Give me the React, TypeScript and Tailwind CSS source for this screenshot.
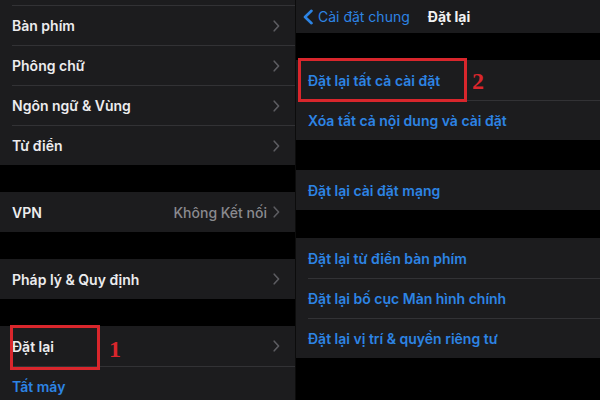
import React from "react";

const font = { fontFamily: "Inter, 'Noto Sans', sans-serif" };

const Chevron = () => (
  <svg width="7" height="12" viewBox="0 0 7 12" className="shrink-0">
    <path d="M1.2 1.2 L5.6 6 L1.2 10.8" fill="none" stroke="#5c5c61" strokeWidth="1.6" strokeLinecap="round" strokeLinejoin="round" />
  </svg>
);

type RowProps = {
  label: string;
  first?: boolean;
  value?: string;
  blue?: boolean;
  chevron?: boolean;
  children?: React.ReactNode;
};

const Row = ({ label, first, value, blue, chevron = true, children }: RowProps) => (
  <div className="relative shrink-0 bg-[#1c1c1e] pl-3">
    <div
      className={`flex h-10 items-center justify-between pr-[15px] ${
        first ? "" : "border-t border-[#323235]"
      }`}
    >
      <span className={`text-[14px] font-semibold ${blue ? "text-[#2d84e4]" : "text-[#ececee]"}`}>{label}</span>
      {chevron && (
        <div className="flex items-center gap-[6px]">
          {value && <span className="text-[14px] font-medium text-[#8a8a8f]">{value}</span>}
          <Chevron />
        </div>
      )}
    </div>
    {children}
  </div>
);

const Gap = ({ h }: { h: string }) => <div className={`shrink-0 ${h}`} />;

const Mark = ({ n, className }: { n: string; className: string }) => (
  <span
    className={`absolute z-10 text-[24px] font-bold leading-none text-[#d9262c] ${className}`}
    style={{ fontFamily: "'Liberation Serif', serif" }}
  >
    {n}
  </span>
);

export default function App() {
  return (
    <div className="flex h-[400px] w-[600px] overflow-hidden bg-black" style={font}>
      {/* left: Cài đặt chung */}
      <div className="flex w-[295px] shrink-0 flex-col">
        <div className="h-[5px] shrink-0 bg-[#1c1c1e]" />
        <Row label="Bàn phím" />
        <Row label="Phông chữ" />
        <Row label="Ngôn ngữ & Vùng" />
        <Row label="Từ điển" />
        <Gap h="h-[27px]" />
        <Row label="VPN" value="Không Kết nối" first />
        <Gap h="h-[27px]" />
        <Row label="Pháp lý & Quy định" first />
        <Gap h="h-[27px]" />
        <Row label="Đặt lại" first>
          <div className="absolute left-[10px] top-[-1px] z-10 h-[45px] w-[90px] border-[3px] border-[#d9262c]" />
          <Mark n="1" className="left-[109px] top-[11px]" />
        </Row>
        <Row label="Tất máy" blue chevron={false} />
      </div>

      <div className="w-px shrink-0 bg-[#0c0c0c]" />

      {/* right: Đặt lại */}
      <div className="flex flex-1 flex-col">
        <div className="flex h-[33px] shrink-0 items-center bg-[#1b1b1d] pl-[6px]">
          <svg width="12" height="16" viewBox="0 0 12 16" className="mr-[4px]">
            <path d="M9.5 1.8 L3 8 L9.5 14.2" fill="none" stroke="#2d84e4" strokeWidth="2.6" strokeLinecap="round" strokeLinejoin="round" />
          </svg>
          <span className="text-[14px] text-[#2d84e4]">Cài đặt chung</span>
          <span className="ml-[18px] text-[14px] font-bold text-[#f2f2f2]">Đặt lại</span>
        </div>
        <Gap h="h-[27px]" />
        <Row label="Đặt lại tất cả cài đặt" blue chevron={false} first>
          <div className="absolute left-[2px] top-[-2px] z-10 h-[44px] w-[169px] border-[3px] border-[#d9262c]" />
          <Mark n="2" className="left-[176px] top-[9px]" />
        </Row>
        <Row label="Xóa tất cả nội dung và cài đặt" blue chevron={false} />
        <Gap h="h-[30px]" />
        <Row label="Đặt lại cài đặt mạng" blue chevron={false} first />
        <Gap h="h-[28px]" />
        <Row label="Đặt lại từ điển bàn phím" blue chevron={false} first />
        <Row label="Đặt lại bố cục Màn hình chính" blue chevron={false} />
        <Row label="Đặt lại vị trí & quyền riêng tư" blue chevron={false} />
      </div>
    </div>
  );
}
